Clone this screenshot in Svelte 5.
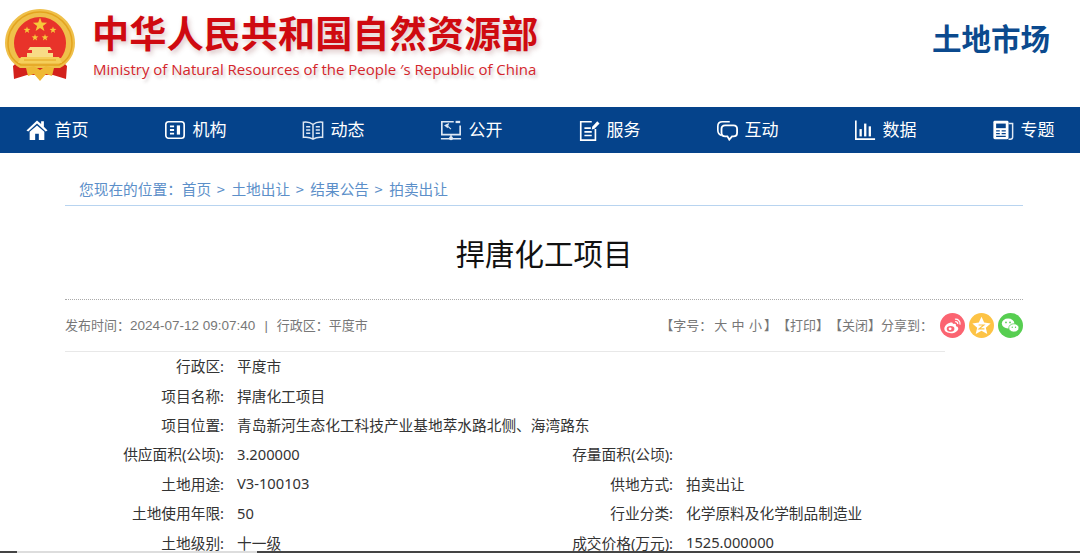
<script>
  const navItems = [
    { label: '首页', icon: 'home' },
    { label: '机构', icon: 'org' },
    { label: '动态', icon: 'book' },
    { label: '公开', icon: 'screen' },
    { label: '服务', icon: 'note' },
    { label: '互动', icon: 'chat' },
    { label: '数据', icon: 'bars' },
    { label: '专题', icon: 'paper' }
  ];

  const crumbs = ['首页', '土地出让', '结果公告', '拍卖出让'];

  const rows = [
    { k1: '行政区', v1: '平度市' },
    { k1: '项目名称', v1: '捍唐化工项目' },
    { k1: '项目位置', v1: '青岛新河生态化工科技产业基地萃水路北侧、海湾路东' },
    { k1: '供应面积(公顷)', v1: '3.200000', k2: '存量面积(公顷)', v2: '' },
    { k1: '土地用途', v1: 'V3-100103', k2: '供地方式', v2: '拍卖出让' },
    { k1: '土地使用年限', v1: '50', k2: '行业分类', v2: '化学原料及化学制品制造业' },
    { k1: '土地级别', v1: '十一级', k2: '成交价格(万元)', v2: '1525.000000' }
  ];

  // five-pointed star centred on cx,cy
  function star(cx, cy, r) {
    const pts = [];
    for (let i = 0; i < 10; i++) {
      const rad = i % 2 ? r * 0.4 : r;
      const a = -Math.PI / 2 + (i * Math.PI) / 5;
      pts.push((cx + rad * Math.cos(a)).toFixed(1) + ',' + (cy + rad * Math.sin(a)).toFixed(1));
    }
    return pts.join(' ');
  }
</script>

<div class="page">
  <header class="top">
    <svg class="emblem" viewBox="2 8 76 76" width="76" height="76">
      <path d="M19 60 L13 66 L14 79 L27 75 L53 75 L66 79 L67 66 L61 60 Z" fill="#d3211c" />
      <path d="M40 9 C59 9 75 24 75 43 C75 54 69 63 60 68 L20 68 C11 63 5 54 5 43 C5 24 21 9 40 9 Z" fill="#efc04a" />
      <path d="M40 12 C57 12 72 26 72 43 C72 53 67 61 59 65 L21 65 C13 61 8 53 8 43 C8 26 23 12 40 12 Z" fill="none" stroke="#e3a41f" stroke-width="1.500" />
      <path d="M40 17 C54 17 66 29 66 43 C66 49 64 54 61 58 L19 58 C16 54 14 49 14 43 C14 29 26 17 40 17 Z" fill="#e8332a" />
      <polygon points={star(40, 25, 7.5)} fill="#f6c93a" />
      <polygon points={star(27, 30, 3.6)} fill="#f6c93a" />
      <polygon points={star(53, 30, 3.6)} fill="#f6c93a" />
      <polygon points={star(35, 37.500, 3.6)} fill="#f6c93a" />
      <polygon points={star(45, 37.500, 3.6)} fill="#f6c93a" />
      <path d="M30 47 L50 47 L52 50 L48 50 L48 53 L53 53 L53 57 L27 57 L27 53 L32 53 L32 50 L28 50 Z" fill="#f8dc86" />
      <path d="M21 57 L59 57 L62 63 L18 63 Z" fill="#f5cf5a" />
      <path d="M24 60 L56 60" stroke="#e3a41f" stroke-width="1" />
      <path d="M26 68 L34 66 L40 70 L46 66 L54 68 L52 76 L46 74 L40 81 L34 74 L28 76 Z" fill="#efb935" />
    </svg>
    <div class="names">
      <div class="cn">中华人民共和国自然资源部</div>
      <div class="en">Ministry of Natural Resources of the People ′s Republic of China</div>
    </div>
    <div class="section">土地市场</div>
  </header>

  <nav class="nav">
    {#each navItems as item}
      <a class="nav-item" href="#top">
        <svg class="nav-icon" viewBox="0 0 24 24" width="22" height="22">
          {#if item.icon === 'home'}
            <path d="M12 1.500 L0.500 12.500 L2.500 13.500 L12 5 L21.500 13.500 L23.500 12.500 L19.500 8.500 L19.500 2.500 L16.500 2.500 L16.500 5.500 Z" fill="#fff" />
            <path d="M12 7 L4 14 L4 23 L10 23 L10 16 L14 16 L14 23 L20 23 L20 14 Z" fill="#fff" />
          {:else if item.icon === 'org'}
            <rect x="2" y="3" width="20" height="18" rx="3" fill="none" stroke="#fff" stroke-width="1.800" />
            <path d="M6.500 8 H11 M6.500 12 H11 M6.500 16 H11" stroke="#fff" stroke-width="2" />
            <rect x="14" y="7" width="3.500" height="10" fill="#fff" />
          {:else if item.icon === 'book'}
            <path d="M12 6 C9 3.500 5 3 1.500 3.500 V20 C5 19.500 9 20 12 22 C15 20 19 19.500 22.500 20 V3.500 C19 3 15 3.500 12 6 Z M12 6 V22" fill="none" stroke="#dfe8f3" stroke-width="1.600" />
            <path d="M4.500 8.500 H9 M4.500 12 H9 M4.500 15.500 H9 M15 8.500 H19.500 M15 12 H19.500 M15 15.500 H19.500" stroke="#dfe8f3" stroke-width="1.600" />
          {:else if item.icon === 'screen'}
            <path d="M15 3 H2 V17 H22 V7" fill="none" stroke="#dfe8f3" stroke-width="1.800" />
            <path d="M5.500 7 L9 5.500 L8 9 Z M8 7.500 L12 11" fill="#dfe8f3" stroke="#dfe8f3" stroke-width="1.200" />
            <rect x="17" y="2" width="5" height="2.500" fill="#dfe8f3" />
            <path d="M12 17 V20 M1 21.500 H23" stroke="#dfe8f3" stroke-width="1.500" />
            <circle cx="12" cy="21" r="2.200" fill="#dfe8f3" />
          {:else if item.icon === 'note'}
            <path d="M15 3 H3 V23 H19 V11" fill="none" stroke="#fff" stroke-width="1.800" />
            <path d="M7 10 H14 M7 14 H15 M7 18 H15" stroke="#fff" stroke-width="1.800" />
            <path d="M15.500 8.500 L21 2.500 L23.500 5 L18 10.500 L15 11.500 Z" fill="#fff" />
          {:else if item.icon === 'chat'}
            <path d="M6 18 C3 17 2 15 2 12 V8 C2 5 4 3 7 3 H15" fill="none" stroke="#fff" stroke-width="1.800" />
            <path d="M10 7 H19 C21.500 7 23 8.500 23 11 V15 C23 17.500 21.500 19 19 19 H17.500 L14.500 22.500 L12.500 19 H10 C7.500 19 6 17.500 6 15 V11 C6 8.500 7.500 7 10 7 Z" fill="none" stroke="#fff" stroke-width="2" />
          {:else if item.icon === 'bars'}
            <path d="M2 1.500 V22 H23" fill="none" stroke="#fff" stroke-width="1.800" />
            <rect x="6" y="11" width="2.500" height="8" fill="#fff" />
            <rect x="11" y="5" width="2.500" height="14" fill="#fff" />
            <rect x="16" y="8" width="2.500" height="11" fill="#fff" />
          {:else}
            <rect x="1.500" y="2" width="16.500" height="20" rx="1.500" fill="#fff" />
            <path d="M18 5 H22.500 V20 C22.500 21.500 21.500 22 20 22 H18" fill="none" stroke="#dfe8f3" stroke-width="1.600" />
            <rect x="4.500" y="5" width="10.500" height="5" fill="#05438b" />
            <path d="M4.500 13 H8.500 M4.500 16 H8.500 M4.500 19 H15 M10.500 13 H15 M10.500 16 H15" stroke="#05438b" stroke-width="1.400" />
          {/if}
        </svg>
        <span>{item.label}</span>
      </a>
    {/each}
  </nav>

  <main class="content">
    <div class="crumbs">
      <span>您现在的位置：</span>
      {#each crumbs as crumb, i}
        {#if i > 0}<span class="sep">&gt;</span>{/if}
        <a href="#top">{crumb}</a>
      {/each}
    </div>

    <h1 class="title">捍唐化工项目</h1>

    <div class="meta">
      <div class="meta-left">
        发布时间：<span class="num">2024-07-12 09:07:40</span><span class="bar">|</span>行政区：平度市
      </div>
      <div class="meta-right">
        <span class="tools">【字号：<span class="sizes">大 中 小</span>】【打印】【关闭】分享到：</span>
        <svg class="share" viewBox="0 0 26 26" width="25" height="25">
          <circle cx="13" cy="13" r="13" fill="#fb6471" />
          <path d="M11 10 C7 11 4.500 14 4.500 16.500 C4.500 19.500 8 21 11.500 21 C15.500 21 19 18.500 19 16 C19 14.500 17.500 14 16.500 13.500 C17 12 16.500 10.500 13.500 11.500 C13.500 10 12.500 9.500 11 10 Z" fill="#fff" />
          <ellipse cx="11" cy="16.500" rx="4" ry="3" fill="#fb6471" />
          <circle cx="10.500" cy="16.500" r="1.500" fill="#fff" />
          <path d="M15.500 6.500 C18.500 6 21.500 8.500 20.800 12 M15.800 9 C17.500 8.800 18.800 10 18.400 11.500" fill="none" stroke="#fff" stroke-width="1.300" />
        </svg>
        <svg class="share" viewBox="0 0 26 26" width="25" height="25">
          <circle cx="13" cy="13" r="13" fill="#fdc345" />
          <polygon points="13,4 15.800,10 22.500,10.800 17.500,15.300 19,21.800 13,18.500 7,21.800 8.500,15.300 3.500,10.800 10.200,10" fill="#fff" />
          <path d="M10 12.500 H15.500 L10.500 16.500 H16" fill="none" stroke="#fdc345" stroke-width="1.200" />
        </svg>
        <svg class="share" viewBox="0 0 26 26" width="25" height="25">
          <circle cx="13" cy="13" r="13" fill="#57ce51" />
          <ellipse cx="10.500" cy="11" rx="6.500" ry="5.200" fill="#fff" />
          <ellipse cx="16.500" cy="15.500" rx="5.300" ry="4.300" fill="#fff" stroke="#57ce51" stroke-width="0.800" />
          <circle cx="8.300" cy="9.800" r="0.900" fill="#57ce51" />
          <circle cx="12.500" cy="9.800" r="0.900" fill="#57ce51" />
          <circle cx="14.800" cy="14.800" r="0.700" fill="#57ce51" />
          <circle cx="18.200" cy="14.800" r="0.700" fill="#57ce51" />
        </svg>
      </div>
    </div>

    <div class="table">
      {#each rows as row}
        <div class="row">
          <div class="key">{row.k1}:</div>
          <div class="val" class:wide={!row.k2}>{row.v1}</div>
          {#if row.k2}
            <div class="key">{row.k2}:</div>
            <div class="val">{row.v2}</div>
          {/if}
        </div>
      {/each}
    </div>
  </main>
  <div class="scrollbar"><div class="thumb"></div></div>
</div>

<style>
  :global(body) {
    margin: 0;
    background: #fff;
  }

  .page {
    height: 553px;
    overflow: hidden;
    position: relative;
    font-family: "Noto Sans CJK SC", "Liberation Sans", sans-serif;
    color: #333;
    text-spacing-trim: space-all;
  }

  .top {
    height: 107px;
    box-sizing: border-box;
    display: flex;
    align-items: flex-start;
    padding: 8px 30px 0 2px;
  }

  .emblem {
    flex-shrink: 0;
    filter: blur(0.4px);
  }

  .names {
    margin-left: 14px;
    margin-top: -1px;
  }

  .cn {
    font-size: 37.200px;
    line-height: 50px;
    font-weight: 700;
    color: #cf0a10;
    white-space: nowrap;
    text-shadow: 2px 3px 5px rgba(120, 40, 40, 0.25);
  }

  .en {
    font-family: "Open Sans", sans-serif;
    font-size: 15px;
    line-height: 20px;
    margin: 2px 0 0 1px;
    color: #d4262c;
    white-space: nowrap;
    text-shadow: 2px 3px 3px rgba(90, 60, 60, 0.25);
  }

  .section {
    margin-left: auto;
    margin-top: 5px;
    font-size: 29.500px;
    line-height: 48px;
    font-weight: 700;
    color: #0b4a8e;
  }

  .nav {
    height: 46px;
    background: #05438b;
    display: grid;
    grid-template-columns: repeat(8, 138px);
    padding-left: 26px;
    align-items: center;
  }

  .nav-item {
    display: flex;
    align-items: center;
    gap: 6.500px;
    color: #fff;
    font-size: 17px;
    line-height: 24px;
    text-decoration: none;
    white-space: nowrap;
  }

  .nav-item span {
    position: relative;
    top: -1px;
  }

  .content {
    margin: 0 57px 0 65px;
  }

  .crumbs {
    height: 53px;
    box-sizing: border-box;
    padding: 25px 0 0 14px;
    border-bottom: 1px solid #b8d4f0;
    display: flex;
    font-size: 14.700px;
    line-height: 22px;
    color: #5c8fc9;
    white-space: nowrap;
  }

  .crumbs a {
    color: #5c8fc9;
    text-decoration: none;
  }

  .sep {
    margin: 0 6.500px 0 5.500px;
  }

  .title {
    margin: 0;
    height: 94px;
    box-sizing: border-box;
    padding-top: 24px;
    border-bottom: 1px dotted #aaa;
    font-size: 29.500px;
    line-height: 44px;
    font-weight: 400;
    color: #111;
    text-align: center;
  }

  .meta {
    height: 51px;
    box-sizing: border-box;
    padding-bottom: 1px;
    display: flex;
    align-items: center;
    justify-content: space-between;
    font-size: 13px;
    color: #777;
  }

  .meta-left {
    position: relative;
    top: -1px;
  }

  .num {
    font-family: "Liberation Sans", sans-serif;
    font-size: 13.500px;
  }

  .bar {
    margin: 0 9px;
    font-family: "Liberation Sans", sans-serif;
  }

  .meta-right {
    display: flex;
    align-items: center;
    gap: 4px;
  }

  .tools {
    margin-right: 3px;
    position: relative;
    top: -1px;
    white-space: nowrap;
  }

  .sizes {
    margin: 0 2px;
    word-spacing: 1.500px;
  }

  .table {
    width: 880px;
    border-top: 1px solid #e8e8e8;
  }

  .row {
    box-sizing: border-box;
    display: grid;
    grid-template-columns: 159px 264px 159px 1fr;
    column-gap: 13px;
    height: 29.400px;
    padding-bottom: 2px;
    align-items: center;
    font-family: "Noto Sans", "Noto Sans CJK SC", sans-serif;
    font-size: 14.700px;
    white-space: nowrap;
  }

  .row .key {
    text-align: right;
  }

  .row .val.wide {
    grid-column: 2 / 5;
  }

  .scrollbar {
    position: absolute;
    left: 0;
    right: 0;
    bottom: 0;
    height: 2px;
    background: #444;
  }

  .thumb {
    margin-left: 17px;
    width: 240px;
    height: 2px;
    background: #ddd;
  }
</style>
